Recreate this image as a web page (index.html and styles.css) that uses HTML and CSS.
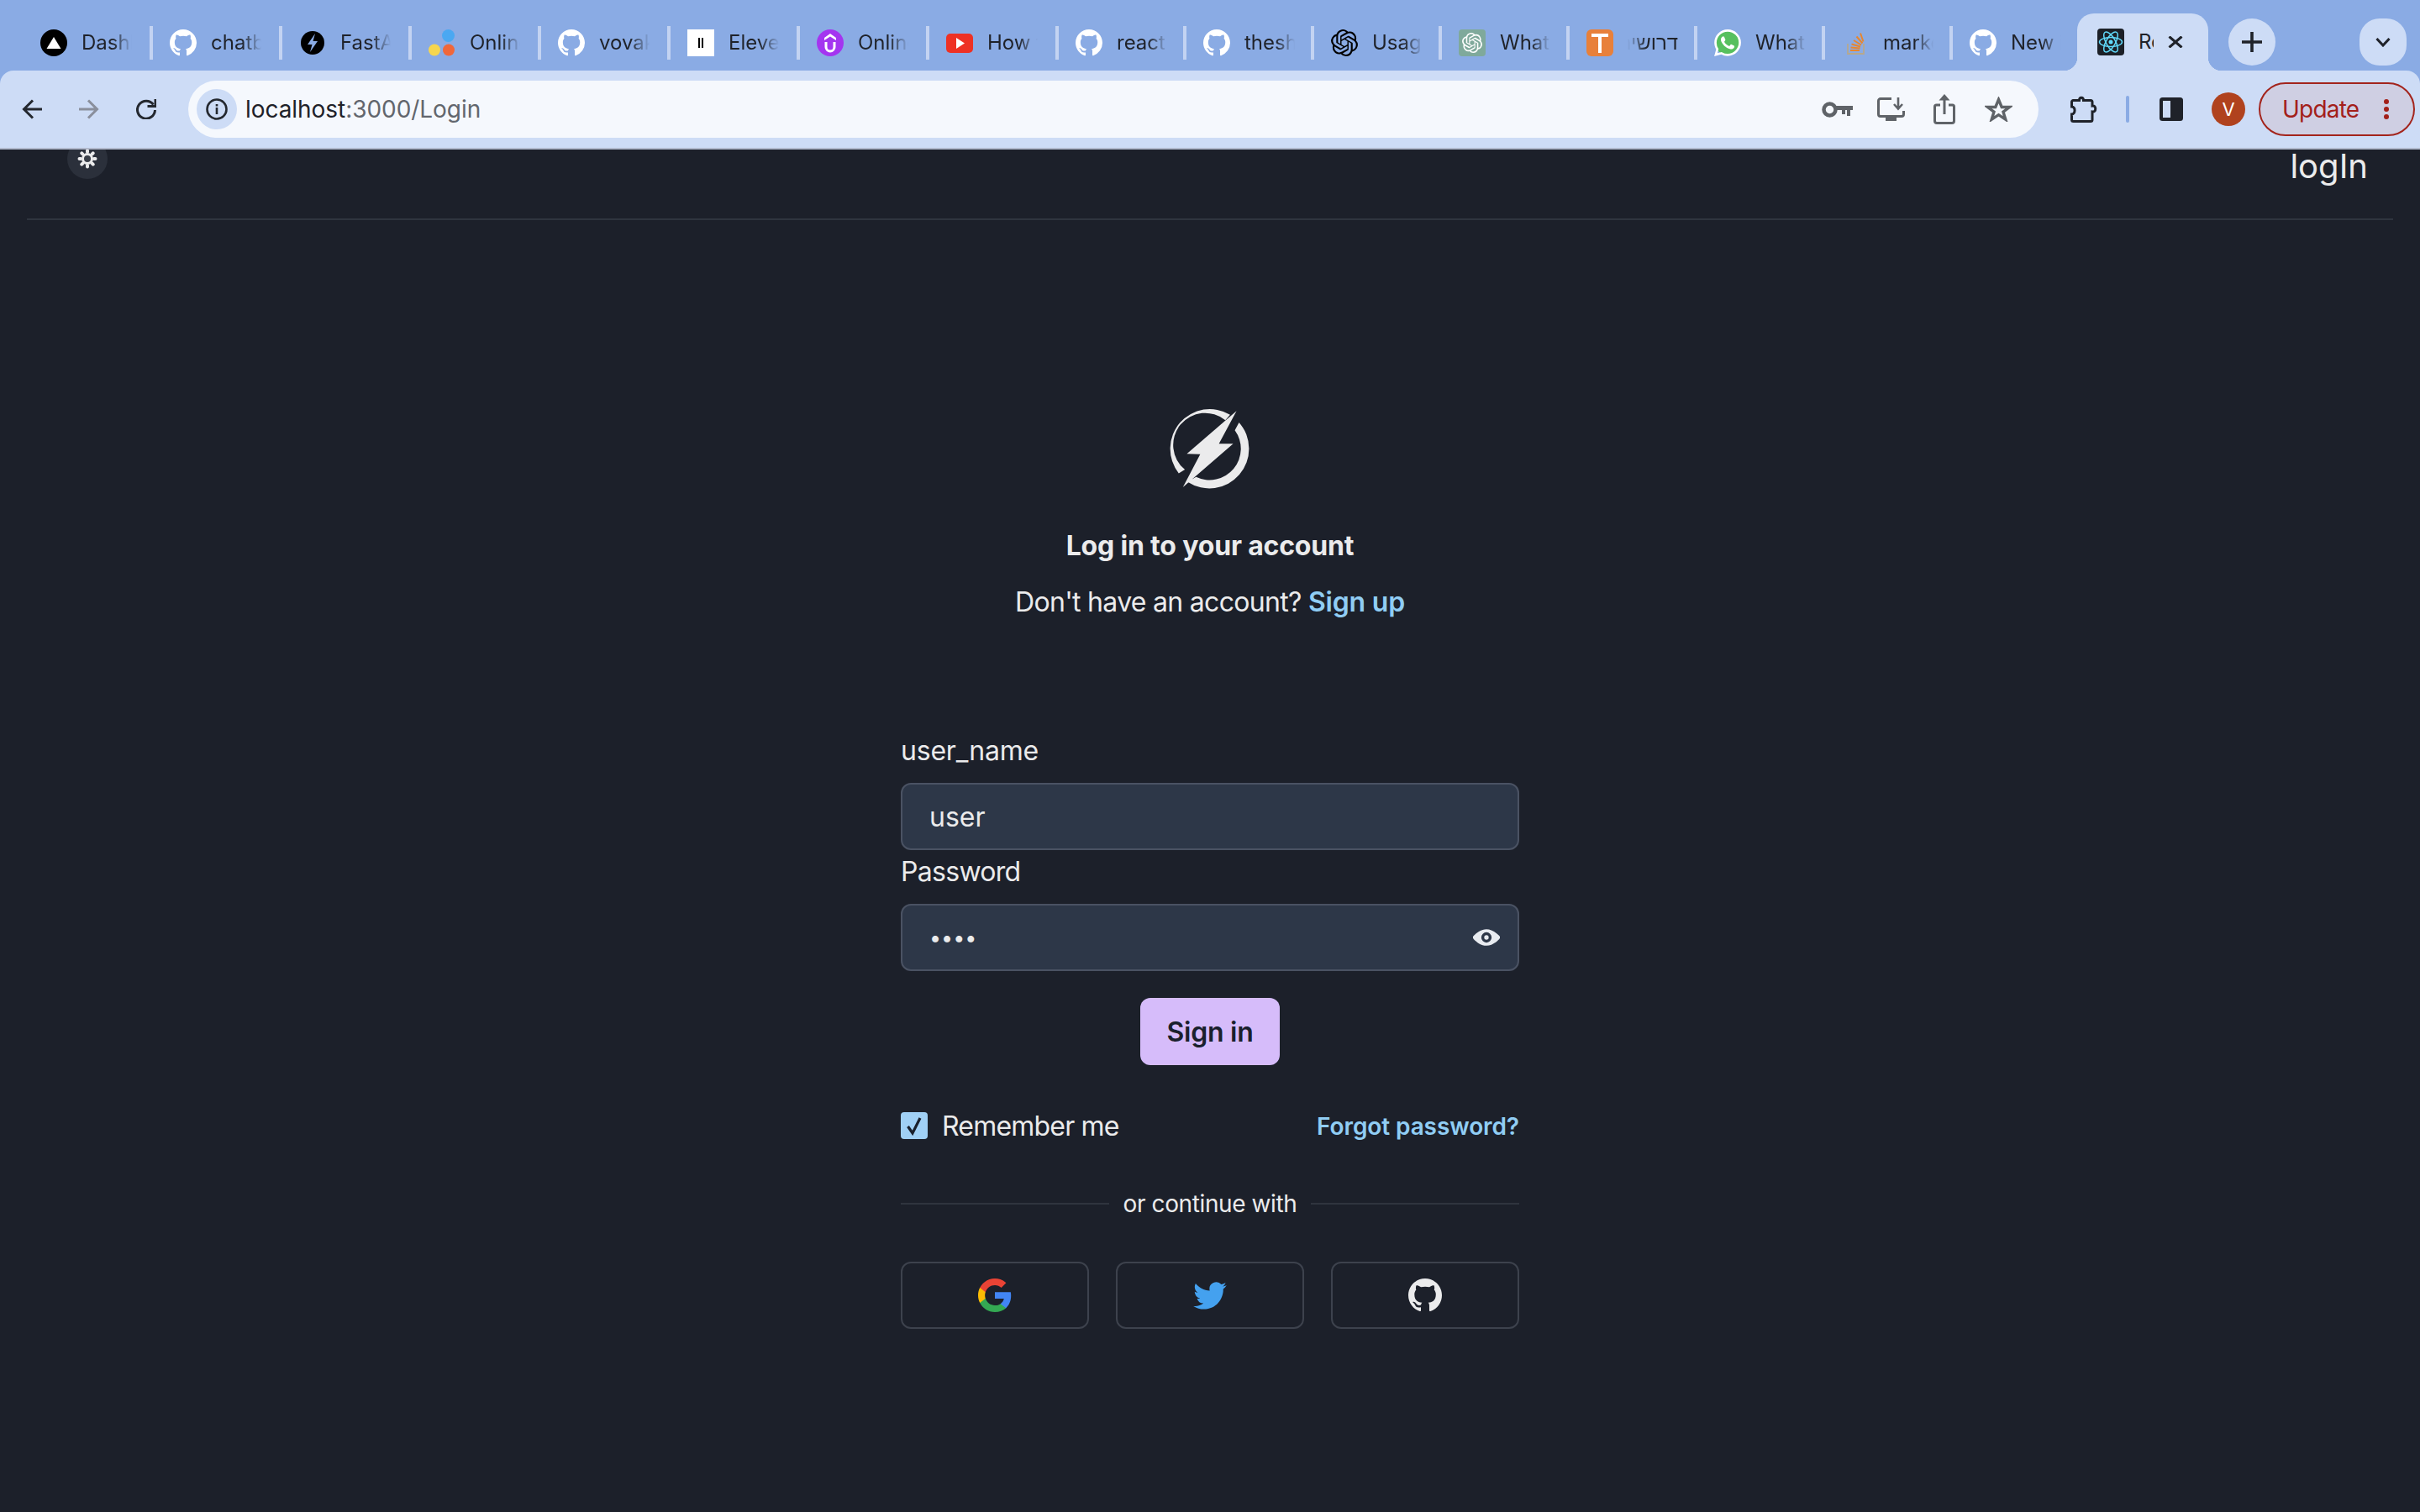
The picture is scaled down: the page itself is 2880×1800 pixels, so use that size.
FILE: index.html
```html
<!DOCTYPE html>
<html lang="en">
<head>
<meta charset="utf-8">
<title>React App</title>
<link rel="stylesheet" href="styles.css">
</head>
<body>
<svg class="defs" width="0" height="0" aria-hidden="true">
  <symbol id="gh" viewBox="0 0 16 16"><path d="M8 0C3.58 0 0 3.58 0 8c0 3.54 2.29 6.53 5.47 7.59.4.07.55-.17.55-.38 0-.19-.01-.82-.01-1.49-2.01.37-2.53-.49-2.69-.94-.09-.23-.48-.94-.82-1.13-.28-.15-.68-.52-.01-.53.63-.01 1.08.58 1.23.82.72 1.21 1.87.87 2.33.66.07-.52.28-.87.51-1.07-1.78-.2-3.64-.89-3.64-3.95 0-.87.31-1.59.82-2.15-.08-.2-.36-1.02.08-2.12 0 0 .67-.21 2.2.82.64-.18 1.32-.27 2-.27.68 0 1.36.09 2 .27 1.53-1.04 2.2-.82 2.2-.82.44 1.1.16 1.92.08 2.12.51.56.82 1.27.82 2.15 0 3.07-1.87 3.75-3.65 3.95.29.25.54.73.54 1.48 0 1.07-.01 1.93-.01 2.2 0 .21.15.46.55.38A8.013 8.013 0 0016 8c0-4.42-3.58-8-8-8z"/></symbol>
  <symbol id="oai" viewBox="0 0 24 24"><path d="M22.2819 9.8211a5.9847 5.9847 0 0 0-.5157-4.9108 6.0462 6.0462 0 0 0-6.5098-2.9A6.0651 6.0651 0 0 0 4.9807 4.1818a5.9847 5.9847 0 0 0-3.9977 2.9 6.0462 6.0462 0 0 0 .7427 7.0966 5.98 5.98 0 0 0 .511 4.9107 6.051 6.051 0 0 0 6.5146 2.9001A5.9847 5.9847 0 0 0 13.2599 24a6.0557 6.0557 0 0 0 5.7718-4.2058 5.9894 5.9894 0 0 0 3.9977-2.9001 6.0557 6.0557 0 0 0-.7475-7.0729zm-9.022 12.6081a4.4755 4.4755 0 0 1-2.8764-1.0408l.1419-.0804 4.7783-2.7582a.7948.7948 0 0 0 .3927-.6813v-6.7369l2.02 1.1686a.071.071 0 0 1 .038.052v5.5826a4.504 4.504 0 0 1-4.4945 4.4944zm-9.6607-4.1254a4.4708 4.4708 0 0 1-.5346-3.0137l.142.0852 4.783 2.7582a.7712.7712 0 0 0 .7806 0l5.8428-3.3685v2.3324a.0804.0804 0 0 1-.0332.0615L9.74 19.9502a4.4992 4.4992 0 0 1-6.1408-1.6464zM2.3408 7.8956a4.485 4.485 0 0 1 2.3655-1.9728V11.6a.7664.7664 0 0 0 .3879.6765l5.8144 3.3543-2.0201 1.1685a.0757.0757 0 0 1-.071 0l-4.8303-2.7865A4.504 4.504 0 0 1 2.3408 7.872zm16.5963 3.8558L13.1038 8.364 15.1192 7.2a.0757.0757 0 0 1 .071 0l4.8303 2.7913a4.4944 4.4944 0 0 1-.6765 8.1042v-5.6772a.79.79 0 0 0-.407-.667zm2.0107-3.0231l-.142-.0852-4.7735-2.7818a.7759.7759 0 0 0-.7854 0L9.409 9.2297V6.8974a.0662.0662 0 0 1 .0284-.0615l4.8303-2.7866a4.4992 4.4992 0 0 1 6.6802 4.66zM8.3065 12.863l-2.02-1.1638a.0804.0804 0 0 1-.038-.0567V6.0742a4.4992 4.4992 0 0 1 7.3757-3.4537l-.142.0805L8.704 5.459a.7948.7948 0 0 0-.3927.6813zm1.0976-2.3654l2.602-1.4998 2.6069 1.4998v2.9994l-2.5974 1.4997-2.6067-1.4997Z"/></symbol>
</svg>

<header class="chrome">
  <div class="tabstrip">
    <div class="tab">
      <svg class="fav" viewBox="0 0 32 32"><circle cx="16" cy="16" r="16" fill="#000"/><path d="M16 9l8.500 14h-17z" fill="#fff"/></svg>
      <span class="tab-title">Dashboard</span>
    </div>
    <div class="tab">
      <svg class="fav fav-white"><use href="#gh"/></svg>
      <span class="tab-title">chatbot</span>
    </div>
    <div class="tab">
      <svg class="fav" viewBox="0 0 32 32"><circle cx="16" cy="16" r="14" fill="#000"/><path d="M19 5l-9 13h5.500L13 27l9-13h-5.500z" fill="#8aabe4"/></svg>
      <span class="tab-title">FastAPI</span>
    </div>
    <div class="tab">
      <svg class="fav" viewBox="0 0 32 32"><circle cx="23.500" cy="7.500" r="7.500" fill="#4aa8f2"/><circle cx="7" cy="24.500" r="7" fill="#f6d64e"/><circle cx="24" cy="24.500" r="7" fill="#f0673a"/></svg>
      <span class="tab-title">Online</span>
    </div>
    <div class="tab">
      <svg class="fav fav-white"><use href="#gh"/></svg>
      <span class="tab-title">vovak</span>
    </div>
    <div class="tab">
      <svg class="fav" viewBox="0 0 32 32"><rect width="32" height="32" fill="#fff"/><path d="M13 10h2v12h-2zM17 10h2v12h-2z" fill="#000"/></svg>
      <span class="tab-title">ElevenLabs</span>
    </div>
    <div class="tab">
      <svg class="fav" viewBox="0 0 32 32"><circle cx="16" cy="16" r="16" fill="#a435f0"/><path d="M16 5l7 5v3l-7-4.500-7 4.500v-3z" fill="#fff"/><path d="M11 15v6a5 5 0 0 0 10 0v-6" fill="none" stroke="#fff" stroke-width="3"/></svg>
      <span class="tab-title">Online</span>
    </div>
    <div class="tab">
      <svg class="fav" viewBox="0 0 32 32"><rect y="5" width="32" height="23" rx="5" fill="#ee3124"/><path d="M12 10l10 6.500-10 6.500z" fill="#fff"/></svg>
      <span class="tab-title">How to</span>
    </div>
    <div class="tab tab-narrow">
      <svg class="fav fav-white"><use href="#gh"/></svg>
      <span class="tab-title">react</span>
    </div>
    <div class="tab tab-narrow">
      <svg class="fav fav-white"><use href="#gh"/></svg>
      <span class="tab-title">theshy</span>
    </div>
    <div class="tab tab-narrow">
      <svg class="fav fav-black"><use href="#oai"/></svg>
      <span class="tab-title">Usage</span>
    </div>
    <div class="tab tab-narrow">
      <svg class="fav" viewBox="0 0 32 32"><rect width="32" height="32" rx="4" fill="#7fa99b"/><svg x="4" y="4" width="24" height="24" fill="#fff"><use href="#oai"/></svg></svg>
      <span class="tab-title">What is</span>
    </div>
    <div class="tab tab-narrow">
      <svg class="fav" viewBox="0 0 32 32"><rect width="32" height="32" rx="6" fill="#e8803a"/><path d="M6 5h20v4h-8v19h-4V9H6z" fill="#fff"/></svg>
      <span class="tab-title tab-title-rtl" lang="he" dir="rtl">דרושים</span>
    </div>
    <div class="tab tab-narrow">
      <svg class="fav" viewBox="0 0 24 24"><circle cx="12" cy="12" r="11" fill="#57c05e"/><path fill="#fff" d="M17.472 14.382c-.297-.149-1.758-.867-2.03-.967-.273-.099-.471-.148-.67.15-.197.297-.767.966-.94 1.164-.173.199-.347.223-.644.075-.297-.15-1.255-.463-2.39-1.475-.883-.788-1.48-1.761-1.653-2.059-.173-.297-.018-.458.13-.606.134-.133.298-.347.446-.52.149-.174.198-.298.298-.497.099-.198.05-.371-.025-.52-.075-.149-.669-1.612-.916-2.207-.242-.579-.487-.5-.669-.51-.173-.008-.371-.01-.57-.01-.198 0-.52.074-.792.372-.272.297-1.04 1.016-1.04 2.479 0 1.462 1.065 2.875 1.213 3.074.149.198 2.096 3.2 5.077 4.487.709.306 1.262.489 1.694.625.712.227 1.36.195 1.871.118.571-.085 1.758-.719 2.006-1.413.248-.694.248-1.289.173-1.413-.074-.124-.272-.198-.57-.347m-5.421 7.403h-.004a9.87 9.87 0 01-5.031-1.378l-.361-.214-3.741.982.998-3.648-.235-.374a9.86 9.86 0 01-1.51-5.26c.001-5.45 4.436-9.884 9.888-9.884 2.64 0 5.122 1.03 6.988 2.898a9.825 9.825 0 012.893 6.994c-.003 5.45-4.437 9.884-9.885 9.884m8.413-18.297A11.815 11.815 0 0012.05 0C5.495 0 .16 5.335.157 11.892c0 2.096.547 4.142 1.588 5.945L.057 24l6.305-1.654a11.882 11.882 0 005.683 1.448h.005c6.554 0 11.89-5.335 11.893-11.893a11.821 11.821 0 00-3.48-8.413z"/></svg>
      <span class="tab-title">WhatsApp</span>
    </div>
    <div class="tab tab-narrow">
      <svg class="fav" viewBox="0 0 32 32"><path d="M7 17v12h19V17" fill="none" stroke="#b5a88f" stroke-width="1.800"/><path d="M10 25h11M10.500 21.500l11 1M11.500 17.500l10.500 3M14 13l9 5.500M17.500 8.500l7 8M22 4.500l3.500 10" fill="none" stroke="#e8862e" stroke-width="2"/></svg>
      <span class="tab-title">markdown</span>
    </div>
    <div class="tab tab-narrow tab-last">
      <svg class="fav fav-white"><use href="#gh"/></svg>
      <span class="tab-title">New issue</span>
    </div>
    <div class="tab-active">
      <svg class="fav" viewBox="0 0 32 32"><rect width="32" height="32" rx="4" fill="#1c2027"/><g fill="none" stroke="#61dafb" stroke-width="1.500"><ellipse cx="16" cy="16" rx="13.500" ry="5.500"/><ellipse cx="16" cy="16" rx="13.500" ry="5.500" transform="rotate(60 16 16)"/><ellipse cx="16" cy="16" rx="13.500" ry="5.500" transform="rotate(120 16 16)"/></g><circle cx="16" cy="16" r="2.500" fill="#61dafb"/></svg>
      <span class="active-title">React App</span>
      <svg class="close" viewBox="0 0 18 14"><path d="M1.500 0.500l15 13M16.500 0.500l-15 13" stroke="#1f2229" stroke-width="3" fill="none"/></svg>
    </div>
    <div class="new-tab"><svg class="plus" viewBox="0 0 26 26"><path d="M13 1v24M1 13h24" stroke="#1f2229" stroke-width="3.600" fill="none"/></svg></div>
    <div class="tab-search"><svg class="chev" viewBox="0 0 18 12"><path d="M1.500 2L9 10l7.500-8" stroke="#1f2229" stroke-width="3" fill="none"/></svg></div>
  </div>

  <div class="toolbar">
    <svg class="nav-icon" viewBox="0 0 24 24"><path d="M24 12H2.500M13 1.500L2.500 12 13 22.500" fill="none" stroke="#24282f" stroke-width="3"/></svg>
    <svg class="nav-icon" viewBox="0 0 24 24"><path d="M0 12h21.500M11 1.500L21.500 12 11 22.500" fill="none" stroke="#8a8f9c" stroke-width="3"/></svg>
    <svg class="nav-icon" viewBox="0 0 24 24"><path d="M20.500 6.500A10.500 10.500 0 1 0 22.500 13" fill="none" stroke="#24282f" stroke-width="3"/><path d="M13.500 8.500h9.500V0" fill="none" stroke="#24282f" stroke-width="3"/></svg>

    <div class="omnibox">
      <span class="info"><svg class="info-icon" viewBox="0 0 26 26"><circle cx="13" cy="13" r="11.500" fill="none" stroke="#24282f" stroke-width="2.600"/><path d="M11.700 11h2.600v8h-2.600zM11.700 7h2.600v2.500h-2.600z" fill="#24282f"/></svg></span>
      <span class="url">localhost<span class="url-dim">:3000/Login</span></span>
      <span class="omni-actions">
        <svg class="i-key" viewBox="0 0 37 19"><circle cx="9.500" cy="9.500" r="7" fill="none" stroke="#5f6368" stroke-width="4.500"/><path d="M17 5h20v5h-3v7h-4v-7h-2v5h-4v-5h-7z" fill="#5f6368"/></svg>
        <svg class="i-install" viewBox="0 0 33 28"><path d="M17 1.500H4A2.500 2.500 0 0 0 1.500 4v16A2.500 2.500 0 0 0 4 22.500h25a2.500 2.500 0 0 0 2.500-2.500v-4" fill="none" stroke="#5f6368" stroke-width="3"/><path d="M25 0v12M20 8l5 5.500L30 8" fill="none" stroke="#5f6368" stroke-width="2.600"/><path d="M10 23h13v5H10z" fill="#5f6368"/></svg>
        <svg class="i-share" viewBox="0 0 26 36"><path d="M8 13H3.500a2 2 0 0 0-2 2v17a2.500 2.500 0 0 0 2.500 2.500h18a2.500 2.500 0 0 0 2.500-2.500V15a2 2 0 0 0-2-2H18" fill="none" stroke="#5f6368" stroke-width="3"/><path d="M13 5v19" stroke="#5f6368" stroke-width="3"/><path d="M13 0l6.500 7.500h-13z" fill="#5f6368"/></svg>
        <svg class="i-star" viewBox="0 0 33 30"><path d="M16.500 3.500l3.700 9h9.300l-7.500 5.700 2.800 9-8.300-5.500-8.300 5.500 2.800-9-7.500-5.700h9.300z" fill="none" stroke="#5f6368" stroke-width="3.400"/></svg>
      </span>
    </div>

    <svg class="i-puzzle" viewBox="0 0 32 32"><path d="M3 5.500h7.500c0-4.500 5-4.500 5 0H24a2 2 0 0 1 2 2V12c5-1 5 8 0 7v9.500a2 2 0 0 1-2 2H3.500a2 2 0 0 1-2-2V22c4.500 0 5-9 0-9V7a2 2 0 0 1 1.500-1.500z" fill="none" stroke="#1f2229" stroke-width="3"/></svg>
    <span class="tool-sep"></span>
    <svg class="i-panel" viewBox="0 0 28 28"><rect width="28" height="28" rx="3.500" fill="#1f2229"/><rect x="4" y="4" width="9" height="20" fill="#cddcf6"/></svg>
    <span class="avatar">V</span>
    <span class="update">
      <span class="update-text">Update</span>
      <svg class="update-dots" viewBox="0 0 6 24"><circle cx="3" cy="3" r="3"/><circle cx="3" cy="12" r="3"/><circle cx="3" cy="21" r="3"/></svg>
    </span>
  </div>
</header>

<main class="page">
  <nav class="topnav">
    <button class="theme-btn" type="button" aria-label="Toggle theme">
      <svg class="sun" viewBox="0 0 24 24"><g fill="none" stroke="#ebebec" stroke-linecap="round"><circle cx="12" cy="12" r="5.500" fill="#3a3f49" stroke-width="3"/><path stroke-width="4" d="M12 2.500v1.500M12 20v1.500M5.300 5.300l1 1M17.700 17.700l1 1M2.500 12H4M20 12h1.500M5.300 18.700l1-1M17.700 6.300l1-1"/></g></svg>
    </button>
    <a class="login-link" href="#">logIn</a>
  </nav>

  <section class="auth">
    <svg class="logo" viewBox="630 105 300 295"><path fill="#ebebec" d="M668 338A142 142 0 0 1 852 128L835 148A112 112 0 0 0 690 325ZM884 156A142 142 0 0 1 700 369L730 351A112 112 0 0 0 869 184ZM875 115L812 232H863L683 388L745 270L697 268Z"/></svg>
    <h1 class="title">Log in to your account</h1>
    <p class="subtitle">Don't have an account? <a class="link-strong" href="#">Sign up</a></p>

    <form class="form">
      <label class="label label-user" for="user">user_name</label>
      <input class="input" id="user" type="text" value="user">
      <label class="label label-pass" for="pass">Password</label>
      <div class="input-wrap">
        <input class="input input-pass" id="pass" type="password" value="1234">
        <svg class="eye" viewBox="0 0 24 24" fill="#e8ebf0"><path d="M23.432,10.524C20.787,7.614,16.4,4.538,12,4.6,7.6,4.537,3.213,7.615.568,10.524a2.211,2.211,0,0,0,0,2.948C3.182,16.351,7.507,19.4,11.839,19.4h.308c4.347,0,8.671-3.049,11.288-5.929A2.21,2.21,0,0,0,23.432,10.524ZM7.4,12A4.6,4.6,0,1,1,12,16.6,4.6,4.6,0,0,1,7.4,12Z"/><circle cx="12" cy="12" r="2"/></svg>
      </div>
      <div class="submit-row"><button class="submit" type="button">Sign in</button></div>
      <div class="options">
        <label class="remember">
          <span class="checkbox"><svg class="check" viewBox="0 0 20 24"><path d="M2.500 13l5.500 8L17 3" fill="none" stroke="#1a202c" stroke-width="3.200"/></svg></span>
          <span class="remember-text">Remember me</span>
        </label>
        <a class="forgot" href="#">Forgot password?</a>
      </div>
      <div class="or"><span class="or-line"></span><span class="or-text">or continue with</span><span class="or-line"></span></div>
      <div class="socials">
        <button class="social" type="button" aria-label="Google">
          <svg class="g-icon" viewBox="1 1 22 22"><path fill="#4285F4" d="M22.560 12.250c0-.78-.07-1.530-.2-2.250H12v4.260h5.920c-.26 1.370-1.040 2.530-2.210 3.310v2.770h3.570c2.080-1.920 3.280-4.740 3.280-8.090z"/><path fill="#34A853" d="M12 23c2.970 0 5.460-.98 7.280-2.660l-3.570-2.770c-.98.66-2.230 1.060-3.710 1.060-2.860 0-5.290-1.930-6.160-4.530H2.180v2.840C3.990 20.530 7.700 23 12 23z"/><path fill="#FBBC05" d="M5.840 14.090c-.22-.66-.35-1.360-.35-2.090s.13-1.430.35-2.090V7.070H2.180C1.430 8.550 1 10.220 1 12s.43 3.450 1.180 4.930l2.850-2.220.81-.62z"/><path fill="#EA4335" d="M12 5.380c1.620 0 3.060.56 4.210 1.640l3.150-3.150C17.450 2.090 14.970 1 12 1 7.700 1 3.990 3.470 2.180 7.070l3.660 2.840c.87-2.600 3.300-4.530 6.160-4.530z"/></svg>
        </button>
        <button class="social" type="button" aria-label="Twitter">
          <svg class="tw-icon" viewBox="0 2 24 20"><path fill="#44a1ef" d="M23.953 4.570a10 10 0 01-2.825.775 4.958 4.958 0 002.163-2.723c-.951.555-2.005.959-3.127 1.184a4.920 4.920 0 00-8.384 4.482C7.690 8.095 4.067 6.130 1.640 3.162a4.822 4.822 0 00-.666 2.475c0 1.710.870 3.213 2.188 4.096a4.904 4.904 0 01-2.228-.616v.06a4.923 4.923 0 003.946 4.827 4.996 4.996 0 01-2.212.085 4.936 4.936 0 004.604 3.417 9.867 9.867 0 01-6.102 2.105c-.39 0-.779-.023-1.170-.067a13.995 13.995 0 007.557 2.209c9.053 0 13.998-7.496 13.998-13.985 0-.21 0-.42-.015-.63A9.935 9.935 0 0024 4.590z"/></svg>
        </button>
        <button class="social" type="button" aria-label="GitHub">
          <svg class="gh-icon"><use href="#gh"/></svg>
        </button>
      </div>
    </form>
  </section>
</main>
</body>
</html>
```

FILE: styles.css
```css
* { box-sizing: border-box; }
html, body { margin: 0; height: 100%; }
body {
  display: flex;
  flex-direction: column;
  height: 1800px;
  overflow: hidden;
  font-family: Inter, "Liberation Sans", sans-serif;
  background: #1c202a;
  color: #ebebec;
}
.defs { display: block; width: 0; height: 0; }

/* Browser chrome */
.chrome { flex: none; position: relative; z-index: 2; background: #8aabe4; }
.tabstrip {
  display: flex;
  align-items: flex-end;
  height: 84px;
  padding-left: 28px;
  background: #8aabe4;
}
.tab {
  display: flex;
  align-items: center;
  flex: none;
  width: 154px;
  height: 40px;
  margin-bottom: 13px;
  padding-left: 20px;
  gap: 17px;
  border-right: 4px solid #c3d3f2;
}
.tab-narrow { width: 152px; }
.tab-last { width: 148px; border-right: 0; }
.fav { display: block; flex: none; width: 32px; height: 32px; }
.fav-white { fill: #fff; }
.fav-black { fill: #000; }
.tab-title {
  width: 60px;
  overflow: hidden;
  white-space: nowrap;
  font-size: 24px;
  line-height: 32px;
  color: #1f2229;
  -webkit-mask-image: linear-gradient(to right, #000 62%, transparent 100%);
  mask-image: linear-gradient(to right, #000 62%, transparent 100%);
}
.tab-title-rtl {
  font-family: "Liberation Sans", sans-serif;
  -webkit-mask-image: linear-gradient(to left, #000 62%, transparent 100%);
  mask-image: linear-gradient(to left, #000 62%, transparent 100%);
}
.tab-active {
  position: relative;
  display: flex;
  flex: none;
  align-items: center;
  width: 156px;
  height: 68px;
  padding-left: 24px;
  gap: 17px;
  background: #cddcf6;
  border-radius: 20px 20px 0 0;
}
.tab-active::before,
.tab-active::after {
  content: "";
  position: absolute;
  bottom: 0;
  width: 16px;
  height: 16px;
}
.tab-active::before { left: -16px; background: radial-gradient(circle at 0 0, transparent 16px, #cddcf6 16.500px); }
.tab-active::after { right: -16px; background: radial-gradient(circle at 100% 0, transparent 16px, #cddcf6 16.500px); }
.active-title {
  width: 18px;
  overflow: hidden;
  white-space: nowrap;
  font-size: 24px;
  line-height: 32px;
  color: #1f2229;
}
.close { display: block; flex: none; width: 18px; height: 14px; }
.new-tab {
  display: flex;
  align-items: center;
  justify-content: center;
  flex: none;
  width: 56px;
  height: 56px;
  margin: 0 0 6px 24px;
  border-radius: 50%;
  background: #cddcf6;
}
.plus { display: block; width: 26px; height: 26px; }
.tab-search {
  display: flex;
  align-items: center;
  justify-content: center;
  flex: none;
  width: 56px;
  height: 56px;
  margin: 0 0 6px 100px;
  border-radius: 24px;
  background: #cddcf6;
}
.chev { display: block; width: 18px; height: 12px; }

.toolbar {
  display: flex;
  align-items: center;
  height: 94px;
  padding-left: 26px;
  background: #cddcf6;
  border-bottom: 2px solid #b0b8cc;
  border-radius: 16px 16px 0 0;
}
.nav-icon { display: block; flex: none; width: 24px; height: 24px; margin-right: 44px; }
.nav-icon:nth-child(3) { margin-right: 38px; }
.omnibox {
  display: flex;
  align-items: center;
  flex: none;
  width: 2202px;
  height: 68px;
  padding: 0 31px 0 10px;
  border-radius: 34px;
  background: #f5f8fd;
}
.info {
  display: flex;
  align-items: center;
  justify-content: center;
  flex: none;
  width: 48px;
  height: 48px;
  border-radius: 50%;
  background: #cddcf6;
}
.info-icon { display: block; width: 26px; height: 26px; }
.url { margin-left: 10px; font-size: 28px; letter-spacing: -0.05px; color: #1f2229; white-space: nowrap; }
.url-dim { color: #62666d; }
.omni-actions { display: flex; align-items: center; margin-left: auto; }
.i-key { display: block; width: 37px; height: 19px; margin-right: 29px; }
.i-install { display: block; width: 33px; height: 28px; margin-right: 34px; }
.i-share { display: block; width: 26px; height: 36px; margin-right: 35px; }
.i-star { display: block; width: 33px; height: 30px; }
.i-puzzle { display: block; flex: none; width: 32px; height: 32px; margin-left: 38px; }
.tool-sep { flex: none; width: 4px; height: 32px; margin-left: 34px; border-radius: 2px; background: #8aabe4; }
.i-panel { display: block; flex: none; width: 28px; height: 28px; margin-left: 36px; }
.avatar {
  display: flex;
  align-items: center;
  justify-content: center;
  flex: none;
  width: 40px;
  height: 40px;
  margin-left: 34px;
  border-radius: 50%;
  background: #b0421e;
  color: #fff;
  font-size: 22px;
}
.update {
  display: flex;
  align-items: center;
  flex: none;
  width: 186px;
  height: 64px;
  margin-left: 16px;
  padding: 0 29px 0 26px;
  justify-content: space-between;
  border: 2px solid #a3241c;
  border-radius: 32px;
  background: #cfcfe3;
  color: #a3201a;
  font-size: 28px;
  letter-spacing: -0.8px;
}
.update-dots { display: block; width: 6px; height: 24px; fill: #a3201a; }

/* Page */
.page { flex: 1; min-height: 0; overflow: hidden; }
.topnav {
  display: flex;
  align-items: flex-start;
  justify-content: space-between;
  height: 97px;
  margin: -13px 32px 0;
  padding: 0 30px 0 48px;
  border-bottom: 2px solid #2f343e;
}
.theme-btn {
  display: flex;
  align-items: center;
  justify-content: center;
  width: 48px;
  height: 48px;
  padding: 0;
  border: 0;
  border-radius: 50%;
  background: #2b303b;
}
.sun { display: block; width: 24px; height: 24px; }
.login-link {
  margin-top: 9px;
  font-size: 40px;
  line-height: 48px;
  color: #ebebec;
  text-decoration: none;
}
.auth {
  display: flex;
  flex-direction: column;
  align-items: center;
  padding-top: 224px;
}
.logo { display: block; width: 100px; height: 98px; }
.title {
  margin: 42px 0 0;
  font-size: 32px;
  line-height: 48px;
  font-weight: 700;
  letter-spacing: -0.18px;
}
.subtitle {
  margin: 19px 0 0;
  font-size: 32px;
  line-height: 48px;
  font-weight: 400;
  letter-spacing: -0.7px;
}
.link-strong { color: #90cdf4; font-weight: 600; letter-spacing: -0.2px; text-decoration: none; }
.form { display: flex; flex-direction: column; width: 736px; margin-top: 127px; }
.label { display: block; margin-bottom: 14px; padding-top: 2px; font-size: 32px; line-height: 48px; }
.label-user { letter-spacing: -0.2px; }
.label-pass { letter-spacing: -0.7px; }
.input {
  display: block;
  width: 100%;
  height: 80px;
  padding: 0 32px;
  border: 2px solid #4a5263;
  border-radius: 12px;
  background: #2d3748;
  color: #ebebec;
  font: 400 32px/48px Inter, "Liberation Sans", sans-serif;
  outline: none;
}
.input-pass { padding-right: 80px; font-size: 25px; }
.input-wrap { position: relative; }
.eye { position: absolute; right: 23px; top: 24px; width: 32px; height: 32px; }
.submit-row { display: flex; justify-content: center; margin-top: 32px; }
.submit {
  width: 166px;
  height: 80px;
  padding: 2px 0 0;
  border: 0;
  border-radius: 12px;
  background: #d6bcfa;
  color: #1a202c;
  font: 600 32px/48px Inter, "Liberation Sans", sans-serif;
  letter-spacing: -0.25px;
}
.options {
  display: flex;
  align-items: center;
  justify-content: space-between;
  height: 48px;
  margin-top: 48px;
}
.remember { display: flex; align-items: center; gap: 17px; font-size: 32px; line-height: 48px; }
.remember-text { padding-top: 2px; letter-spacing: -0.8px; }
.checkbox {
  display: flex;
  align-items: center;
  justify-content: center;
  width: 32px;
  height: 32px;
  border-radius: 4px;
  background: #a0d0f5;
}
.check { display: block; width: 20px; height: 24px; }
.forgot { padding-top: 2px; font-size: 28px; font-weight: 600; letter-spacing: -0.1px; color: #90cdf4; text-decoration: none; }
.or { display: flex; align-items: center; height: 42px; margin-top: 48px; }
.or-line { flex: 1; height: 2px; background: #2f343e; }
.or-text { padding: 0 17px; font-size: 28px; line-height: 42px; letter-spacing: -0.4px; }
.socials { display: grid; grid-template-columns: repeat(3, 1fr); gap: 32px; margin-top: 48px; }
.social {
  display: flex;
  align-items: center;
  justify-content: center;
  height: 80px;
  padding: 0;
  border: 2px solid #3d424d;
  border-radius: 12px;
  background: transparent;
}
.g-icon { display: block; width: 40px; height: 40px; }
.tw-icon { display: block; width: 40px; height: 33px; }
.gh-icon { display: block; width: 40px; height: 40px; fill: #ebebec; }
```
